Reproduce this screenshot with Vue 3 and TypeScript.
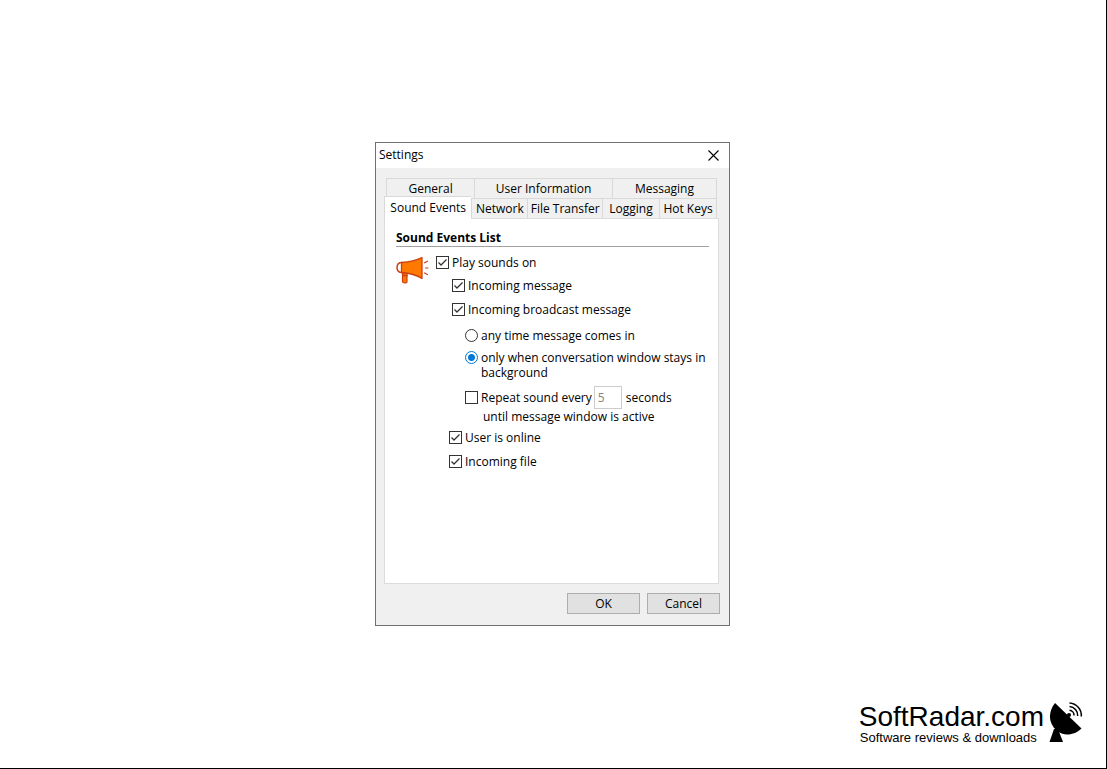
<script setup lang="ts">
import { ref } from 'vue'

interface Tab {
  name: string
  grow: number
}

const upperTabs: Tab[] = [
  { name: 'General', grow: 88 },
  { name: 'User Information', grow: 138 },
  { name: 'Messaging', grow: 104 },
]
const lowerTabs: Tab[] = [
  { name: 'Sound Events', grow: 88 },
  { name: 'Network', grow: 56 },
  { name: 'File Transfer', grow: 75 },
  { name: 'Logging', grow: 57 },
  { name: 'Hot Keys', grow: 57 },
]

const playSounds = ref(true)
const onMessage = ref(true)
const onBroadcast = ref(true)
const when = ref<'any' | 'background'>('background')
const repeat = ref(false)
const interval = ref('5')
const userOnline = ref(true)
const incomingFile = ref(true)
</script>

<template>
  <div class="page">
    <main class="dialog" role="dialog" aria-labelledby="dialog-title">
      <header class="titlebar">
        <h1 id="dialog-title" class="title">Settings</h1>
        <button class="close" type="button" aria-label="Close">
          <svg width="11" height="11" viewBox="0 0 11 11" aria-hidden="true">
            <path d="M.5 .5 10.5 10.5M10.5 .5 .5 10.5" stroke="#000" stroke-width="1.1" fill="none" />
          </svg>
        </button>
      </header>

      <div class="body">
        <div role="tablist" class="tabs">
          <div class="tab-row upper" role="presentation">
            <button v-for="t in upperTabs" :key="t.name" class="tab" type="button" role="tab" aria-selected="false" :style="{ flexGrow: t.grow }">{{ t.name }}</button>
          </div>
          <div class="tab-row lower" role="presentation">
            <button v-for="(t, i) in lowerTabs" :key="t.name" class="tab" :class="{ active: i === 0 }" type="button" role="tab" :aria-selected="i === 0" :style="{ flexGrow: t.grow }">{{ t.name }}</button>
          </div>
        </div>

        <section class="panel" role="tabpanel" aria-label="Sound Events">
          <h2 class="heading">Sound Events List</h2>
          <div class="content">
            <svg class="horn" width="33" height="29" viewBox="0 0 33 29" aria-hidden="true">
              <g stroke="#cc4010" stroke-linejoin="round" stroke-linecap="round">
                <path d="M6 7.500C2.500 7.500 1 9.500 1 12.500S2.500 17.500 6 17.500" fill="#fff" stroke-width="1.500" />
                <path d="M6.500 18h4.500v8.500q0 1.500-2.200 1.500t-2.300-1.500z" fill="#ff7800" stroke-width="1.200" />
                <path d="M7 20.500h4" stroke-width="1.500" />
                <path d="M5.500 7.500C13 7 20 5.500 26 2.500V23.500C20 19.500 13 18 5.500 17.500Z" fill="#ff7800" stroke-width="1.300" />
                <path d="M28.500 7.800 31.500 6.300M29.500 13h2.500M28.500 18l3 1.500" fill="none" stroke-width="1.200" />
              </g>
            </svg>

            <div class="options">
              <label class="row">
                <span class="mark"><input v-model="playSounds" type="checkbox" /><svg viewBox="0 0 13 13"><path d="M2.500 6.500 5 9 10.500 3.500" /></svg></span>
                <span>Play sounds on</span>
              </label>
              <label class="row message">
                <span class="mark"><input v-model="onMessage" type="checkbox" /><svg viewBox="0 0 13 13"><path d="M2.500 6.500 5 9 10.500 3.500" /></svg></span>
                <span>Incoming message</span>
              </label>
              <label class="row broadcast">
                <span class="mark"><input v-model="onBroadcast" type="checkbox" /><svg viewBox="0 0 13 13"><path d="M2.500 6.500 5 9 10.500 3.500" /></svg></span>
                <span>Incoming broadcast message</span>
              </label>

              <div class="nested">
                <label class="row">
                  <span class="mark"><input v-model="when" type="radio" name="when" value="any" /></span>
                  <span>any time message comes in</span>
                </label>
                <label class="row wrap">
                  <span class="mark"><input v-model="when" type="radio" name="when" value="background" /></span>
                  <span>only when conversation window stays in background</span>
                </label>
                <div class="repeat">
                  <label class="row">
                    <span class="mark"><input v-model="repeat" type="checkbox" /><svg viewBox="0 0 13 13"><path d="M2.500 6.500 5 9 10.500 3.500" /></svg></span>
                    <span>Repeat sound every</span>
                  </label>
                  <input id="interval" v-model="interval" class="interval" type="text" :disabled="!repeat" />
                  <label for="interval">seconds</label>
                </div>
                <p class="until">until message window is active</p>
              </div>

              <label class="row user">
                <span class="mark"><input v-model="userOnline" type="checkbox" /><svg viewBox="0 0 13 13"><path d="M2.500 6.500 5 9 10.500 3.500" /></svg></span>
                <span>User is online</span>
              </label>
              <label class="row file">
                <span class="mark"><input v-model="incomingFile" type="checkbox" /><svg viewBox="0 0 13 13"><path d="M2.500 6.500 5 9 10.500 3.500" /></svg></span>
                <span>Incoming file</span>
              </label>
            </div>
          </div>
        </section>

        <footer class="actions">
          <button class="action" type="button">OK</button>
          <button class="action" type="button">Cancel</button>
        </footer>
      </div>
    </main>

    <aside class="brand">
      <div class="brand-text">
        <div class="brand-name">SoftRadar.com</div>
        <div class="brand-line">Software reviews &amp; downloads</div>
      </div>
      <svg width="34" height="42" viewBox="0 0 34 42" aria-hidden="true">
        <path d="M6 1 32.500 26.500C26 33 15 35 7.500 28.500 -1 21 -1 10 6 1Z" />
        <path d="M17 15 20 13" stroke="#000" stroke-width="2" />
        <circle cx="20" cy="13" r="2" />
        <path d="M5 27H9L14 40H.5Z" />
        <g fill="none" stroke="#000" stroke-width="1.500">
          <path d="M20.500 8.300A5 5 0 0 1 25 13.500" />
          <path d="M20.500 4.500A9 9 0 0 1 28.700 14" />
          <path d="M20.500 1A12.500 12.500 0 0 1 32.300 14.500" />
        </g>
      </svg>
    </aside>
  </div>
</template>

<style>
body {
  margin: 0;
  background: #fff;
}
</style>

<style scoped>
.page {
  box-sizing: border-box;
  min-height: 100vh;
  display: grid;
  grid-template-rows: 1fr auto 1fr;
  padding-right: 1px;
  border-right: 1px solid #000;
  border-bottom: 1px solid #000;
  color: #000;
  font: 12px/16px "Open Sans", "Noto Sans", sans-serif;
}
button,
input {
  font: inherit;
  color: inherit;
  box-sizing: border-box;
  margin: 0;
  padding: 0;
}
.dialog {
  grid-row: 2;
  justify-self: center;
  box-sizing: border-box;
  width: 355px;
  max-width: 100%;
  border: 1px solid #707070;
  background: #f0f0f0;
}
.titlebar {
  box-sizing: border-box;
  display: flex;
  align-items: center;
  justify-content: space-between;
  height: 25px;
  padding: 0 10px 1px 3px;
  background: #fff;
}
.title {
  margin: 0;
  font-size: inherit;
  font-weight: 400;
}
.close {
  display: flex;
  border: 0;
  background: none;
}
.body {
  padding: 10px 10px 11px 8px;
}
.tab-row {
  display: flex;
  height: 20px;
}
.upper {
  margin: 0 2px;
}
.lower {
  margin-right: 2px;
}
.tab {
  flex: 1 1 0;
  min-width: 0;
  border: solid #d9d9d9;
  border-width: 1px 0 0 1px;
  background: #f0f0f0;
  white-space: nowrap;
}
.tab:last-child {
  border-right-width: 1px;
}
.active {
  position: relative;
  margin: -2px 0 -1px;
  padding-bottom: 1px;
  background: #fff;
}
.panel {
  min-height: 366px;
  box-sizing: border-box;
  padding: 11px 9px 0 11px;
  border: 1px solid #dcdcdc;
  background: #fff;
}
.heading {
  margin: 0;
  border-bottom: 1px solid #a0a0a0;
  font-size: inherit;
  font-weight: 700;
}
.content {
  display: flex;
  padding-top: 8px;
}
.horn {
  flex: none;
  margin-right: 7px;
}
.options {
  flex: 1;
  min-width: 0;
}
.row {
  display: flex;
  gap: 3px;
}
.mark {
  flex: none;
  display: grid;
  width: 13px;
  height: 13px;
  margin-top: 1px;
}
.mark > * {
  grid-area: 1 / 1;
  width: 13px;
  height: 13px;
}
.mark input {
  appearance: none;
  border: 1px solid #333;
  background: #fff;
}
.mark svg {
  visibility: hidden;
  fill: none;
  stroke: #333;
  stroke-width: 1.3;
  pointer-events: none;
}
.mark input:checked + svg {
  visibility: visible;
}
.mark input[type='radio'] {
  border-radius: 50%;
}
.mark input[type='radio']:checked {
  border-color: #0078d7;
  background: radial-gradient(circle, #0078d7 3px, #fff 4px);
}
.message {
  margin: 7px 0 0 16px;
}
.broadcast {
  margin: 8px 0 0 16px;
}
.nested {
  padding: 10px 0 0 29px;
}
.wrap {
  margin-top: 6px;
  line-height: 15px;
}
.repeat {
  display: flex;
  align-items: center;
  margin-top: 6px;
}
.interval {
  width: 28px;
  height: 23px;
  margin: 0 4px 0 2px;
  padding: 0 3px;
  border: 1px solid #ccc;
  border-radius: 0;
  background: #fff;
}
.interval:disabled {
  color: #838383;
}
.until {
  margin: 0 0 0 18px;
}
.user {
  margin: 5px 0 0 13px;
}
.file {
  margin: 8px 0 0 13px;
}
.actions {
  display: flex;
  justify-content: flex-end;
  gap: 7px;
  margin: 9px -1px 0 0;
}
.action {
  width: 73px;
  height: 21px;
  border: 1px solid #adadad;
  background: #e1e1e1;
}
.brand {
  grid-row: 3;
  align-self: end;
  justify-self: end;
  display: flex;
  align-items: flex-end;
  gap: 5px;
  padding: 0 22px 24px 0;
  font-family: "Liberation Sans", Arial, sans-serif;
}
.brand-name {
  font-size: 28px;
  line-height: 28px;
}
.brand-line {
  padding-left: 1px;
  font-size: 13px;
  line-height: 13px;
}
</style>
